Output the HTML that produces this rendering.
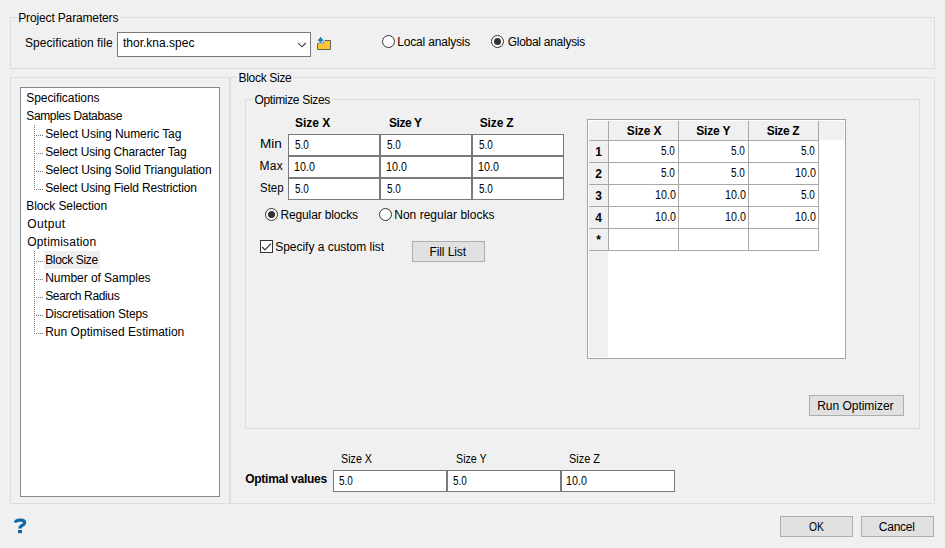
<!DOCTYPE html>
<html><head><meta charset="utf-8"><style>
html,body{margin:0;padding:0;}
body{width:945px;height:548px;background:#f0f0f0;position:relative;overflow:hidden;font-family:"Liberation Sans",sans-serif;font-size:12px;color:#000;}
.a{position:absolute;box-sizing:border-box;}
.t{line-height:14px;white-space:nowrap;}
</style></head><body>
<div class="a" style="left:10px;top:17px;width:7px;height:1px;background:#dcdcdc"></div>
<div class="a" style="left:120px;top:17px;width:815px;height:1px;background:#dcdcdc"></div>
<div class="a" style="left:10px;top:17px;width:1px;height:52px;background:#dcdcdc"></div>
<div class="a" style="left:934px;top:17px;width:1px;height:52px;background:#dcdcdc"></div>
<div class="a" style="left:10px;top:68px;width:925px;height:1px;background:#dcdcdc"></div>
<div class="a t" style="left:18.27px;top:11px;letter-spacing:-0.149px;">Project Parameters</div>
<div class="a t" style="left:25.02px;top:36px;letter-spacing:0.051px;">Specification file</div>
<div class="a" style="left:117px;top:32px;width:194px;height:25px;border:1px solid #7a7a7a;background:#fff;box-sizing:border-box;"></div>
<div class="a t" style="left:123px;top:36px;">thor.kna.spec</div>
<svg class="a" style="left:297px;top:41px" width="11" height="7"><path d="M1.2 2.2 L5 5.8 L8.8 2.0" stroke="#3a3a3a" stroke-width="1.15" fill="none"/></svg>
<svg class="a" style="left:314px;top:34px" width="20" height="18">
<path d="M3.5 9.5 H9 L10.5 6.5 H16.5 V15.5 H3.5 Z" fill="#fdc52f" stroke="#606060" stroke-width="1"/>
<path d="M6.6 2.2 L10.6 7.2 H8.3 V9.2 H4.9 V7.2 H2.6 Z" fill="#1a80b8" stroke="#fff" stroke-width="0.8" stroke-linejoin="round"/>
</svg>
<div class="a" style="left:382px;top:35px;width:13px;height:13px;border:1px solid #333;border-radius:50%;background:#fff"></div>
<div class="a t" style="left:397.23px;top:35px;letter-spacing:-0.175px;">Local analysis</div>
<div class="a" style="left:491px;top:35px;width:13px;height:13px;border:1px solid #333;border-radius:50%;background:#fff"></div>
<div class="a" style="left:494px;top:38px;width:7px;height:7px;border-radius:50%;background:#333"></div>
<div class="a t" style="left:507.73px;top:35px;letter-spacing:-0.275px;">Global analysis</div>
<div class="a" style="left:10px;top:77px;width:227px;height:1px;background:#dcdcdc"></div>
<div class="a" style="left:10px;top:77px;width:1px;height:427px;background:#dcdcdc"></div>
<div class="a" style="left:10px;top:503px;width:925px;height:1px;background:#dcdcdc"></div>
<div class="a" style="left:229px;top:77px;width:1px;height:427px;background:#dcdcdc"></div>
<div class="a" style="left:230px;top:77px;width:1px;height:427px;background:#dcdcdc"></div>
<div class="a" style="left:293px;top:77px;width:642px;height:1px;background:#dcdcdc"></div>
<div class="a" style="left:934px;top:77px;width:1px;height:427px;background:#dcdcdc"></div>
<div class="a t" style="left:238.52px;top:71px;letter-spacing:-0.306px;">Block Size</div>
<div class="a" style="left:20px;top:87px;width:200px;height:410px;border:1px solid #828790;background:#fff;box-sizing:border-box;"></div>
<div class="a" style="left:44px;top:251px;width:56px;height:18px;background:#eeeeee;box-sizing:border-box;"></div>
<div class="a t" style="left:26.23px;top:91px;letter-spacing:-0.056px;">Specifications</div>
<div class="a t" style="left:26.23px;top:109px;letter-spacing:-0.345px;">Samples Database</div>
<div class="a t" style="left:45.19px;top:127px;letter-spacing:-0.073px;">Select Using Numeric Tag</div>
<div class="a t" style="left:45.19px;top:145px;letter-spacing:-0.176px;">Select Using Character Tag</div>
<div class="a t" style="left:45.19px;top:163px;letter-spacing:-0.098px;">Select Using Solid Triangulation</div>
<div class="a t" style="left:45.19px;top:181px;letter-spacing:-0.172px;">Select Using Field Restriction</div>
<div class="a t" style="left:26.23px;top:199px;letter-spacing:-0.084px;">Block Selection</div>
<div class="a t" style="left:27.23px;top:217px;letter-spacing:0.38px;">Output</div>
<div class="a t" style="left:27.23px;top:235px;letter-spacing:0.196px;">Optimisation</div>
<div class="a t" style="left:45.19px;top:253px;letter-spacing:-0.333px;">Block Size</div>
<div class="a t" style="left:45.19px;top:271px;letter-spacing:-0.042px;">Number of Samples</div>
<div class="a t" style="left:45.19px;top:289px;letter-spacing:-0.352px;">Search Radius</div>
<div class="a t" style="left:45.19px;top:307px;letter-spacing:-0.174px;">Discretisation Steps</div>
<div class="a t" style="left:45.19px;top:325px;letter-spacing:0.015px;">Run Optimised Estimation</div>
<div class="a" style="left:34px;top:125px;width:1px;height:65px;background:repeating-linear-gradient(to bottom,#777 0 1px,transparent 1px 2px)"></div>
<div class="a" style="left:36px;top:135px;width:7px;height:1px;background:repeating-linear-gradient(to right,#777 0 1px,transparent 1px 2px)"></div>
<div class="a" style="left:36px;top:153px;width:7px;height:1px;background:repeating-linear-gradient(to right,#777 0 1px,transparent 1px 2px)"></div>
<div class="a" style="left:36px;top:171px;width:7px;height:1px;background:repeating-linear-gradient(to right,#777 0 1px,transparent 1px 2px)"></div>
<div class="a" style="left:36px;top:189px;width:7px;height:1px;background:repeating-linear-gradient(to right,#777 0 1px,transparent 1px 2px)"></div>
<div class="a" style="left:34px;top:251px;width:1px;height:83px;background:repeating-linear-gradient(to bottom,#777 0 1px,transparent 1px 2px)"></div>
<div class="a" style="left:36px;top:261px;width:7px;height:1px;background:repeating-linear-gradient(to right,#777 0 1px,transparent 1px 2px)"></div>
<div class="a" style="left:36px;top:279px;width:7px;height:1px;background:repeating-linear-gradient(to right,#777 0 1px,transparent 1px 2px)"></div>
<div class="a" style="left:36px;top:297px;width:7px;height:1px;background:repeating-linear-gradient(to right,#777 0 1px,transparent 1px 2px)"></div>
<div class="a" style="left:36px;top:315px;width:7px;height:1px;background:repeating-linear-gradient(to right,#777 0 1px,transparent 1px 2px)"></div>
<div class="a" style="left:36px;top:333px;width:7px;height:1px;background:repeating-linear-gradient(to right,#777 0 1px,transparent 1px 2px)"></div>
<div class="a" style="left:245px;top:99px;width:8px;height:1px;background:#dcdcdc"></div>
<div class="a" style="left:332px;top:99px;width:588px;height:1px;background:#dcdcdc"></div>
<div class="a" style="left:245px;top:99px;width:1px;height:330px;background:#dcdcdc"></div>
<div class="a" style="left:919px;top:99px;width:1px;height:330px;background:#dcdcdc"></div>
<div class="a" style="left:245px;top:428px;width:675px;height:1px;background:#dcdcdc"></div>
<div class="a t" style="left:254.5px;top:93px;letter-spacing:-0.329px;">Optimize Sizes</div>
<div class="a t" style="left:295.0px;top:116px;font-weight:bold;letter-spacing:0.0px;">Size X</div>
<div class="a t" style="left:389.02px;top:116px;font-weight:bold;letter-spacing:-0.44px;">Size Y</div>
<div class="a t" style="left:479.73px;top:116px;font-weight:bold;letter-spacing:-0.14px;">Size Z</div>
<div class="a t" style="left:259.8px;top:137px;transform:scaleX(1.1279);transform-origin:0 0;">Min</div>
<div class="a t" style="left:259.51px;top:159px;letter-spacing:0.35px;">Max</div>
<div class="a t" style="left:259.6px;top:181px;transform:scaleX(0.9529);transform-origin:0 0;">Step</div>
<div class="a" style="left:288px;top:134px;width:92px;height:22px;border:1px solid #7a7a7a;background:#fff;box-sizing:border-box;"></div>
<div class="a t" style="left:294.6px;top:138px;transform:scaleX(0.8299);transform-origin:0 0;">5.0</div>
<div class="a" style="left:380px;top:134px;width:92px;height:22px;border:1px solid #7a7a7a;background:#fff;box-sizing:border-box;"></div>
<div class="a t" style="left:386.6px;top:138px;transform:scaleX(0.8299);transform-origin:0 0;">5.0</div>
<div class="a" style="left:472px;top:134px;width:92px;height:22px;border:1px solid #7a7a7a;background:#fff;box-sizing:border-box;"></div>
<div class="a t" style="left:478.6px;top:138px;transform:scaleX(0.8299);transform-origin:0 0;">5.0</div>
<div class="a" style="left:288px;top:156px;width:92px;height:22px;border:1px solid #7a7a7a;background:#fff;box-sizing:border-box;"></div>
<div class="a t" style="left:293.6px;top:160px;transform:scaleX(0.8921);transform-origin:0 0;">10.0</div>
<div class="a" style="left:380px;top:156px;width:92px;height:22px;border:1px solid #7a7a7a;background:#fff;box-sizing:border-box;"></div>
<div class="a t" style="left:385.6px;top:160px;transform:scaleX(0.8921);transform-origin:0 0;">10.0</div>
<div class="a" style="left:472px;top:156px;width:92px;height:22px;border:1px solid #7a7a7a;background:#fff;box-sizing:border-box;"></div>
<div class="a t" style="left:477.6px;top:160px;transform:scaleX(0.8921);transform-origin:0 0;">10.0</div>
<div class="a" style="left:288px;top:178px;width:92px;height:22px;border:1px solid #7a7a7a;background:#fff;box-sizing:border-box;"></div>
<div class="a t" style="left:294.6px;top:182px;transform:scaleX(0.8299);transform-origin:0 0;">5.0</div>
<div class="a" style="left:380px;top:178px;width:92px;height:22px;border:1px solid #7a7a7a;background:#fff;box-sizing:border-box;"></div>
<div class="a t" style="left:386.6px;top:182px;transform:scaleX(0.8299);transform-origin:0 0;">5.0</div>
<div class="a" style="left:472px;top:178px;width:92px;height:22px;border:1px solid #7a7a7a;background:#fff;box-sizing:border-box;"></div>
<div class="a t" style="left:478.6px;top:182px;transform:scaleX(0.8299);transform-origin:0 0;">5.0</div>
<div class="a" style="left:265px;top:208px;width:13px;height:13px;border:1px solid #333;border-radius:50%;background:#fff"></div>
<div class="a" style="left:268px;top:211px;width:7px;height:7px;border-radius:50%;background:#333"></div>
<div class="a t" style="left:280.52px;top:208px;letter-spacing:-0.146px;">Regular blocks</div>
<div class="a" style="left:379px;top:208px;width:13px;height:13px;border:1px solid #333;border-radius:50%;background:#fff"></div>
<div class="a t" style="left:394.27px;top:208px;letter-spacing:0.008px;">Non regular blocks</div>
<div class="a" style="left:260px;top:240px;width:13px;height:13px;border:1px solid #333;background:#fff"></div>
<svg class="a" style="left:260px;top:240px" width="13" height="13"><path d="M2.2 7 L5 9.8 L11 3.6" stroke="#333" stroke-width="1.2" fill="none"/></svg>
<div class="a t" style="left:275.23px;top:240px;letter-spacing:-0.025px;">Specify a custom list</div>
<div class="a" style="left:412px;top:241px;width:73px;height:21px;border:1px solid #adadad;background:#e1e1e1;box-sizing:border-box;"></div>
<div class="a t" style="left:429.5px;top:245px;letter-spacing:-0.102px;">Fill List</div>
<div class="a" style="left:587px;top:119px;width:259px;height:240px;border:1px solid #a0a3a9;background:#fff;box-sizing:border-box;"></div>
<div class="a" style="left:589px;top:121px;width:255px;height:19px;background:#f0f0f0;box-sizing:border-box;"></div>
<div class="a" style="left:589px;top:121px;width:19px;height:236px;background:#f0f0f0;box-sizing:border-box;"></div>
<div class="a" style="left:608px;top:121px;width:1px;height:20px;background:#a8a8a8"></div>
<div class="a" style="left:678px;top:121px;width:1px;height:20px;background:#a8a8a8"></div>
<div class="a" style="left:748px;top:121px;width:1px;height:20px;background:#a8a8a8"></div>
<div class="a" style="left:818px;top:121px;width:1px;height:20px;background:#a8a8a8"></div>
<div class="a" style="left:589px;top:140px;width:230px;height:1px;background:#a8a8a8"></div>
<div class="a" style="left:589px;top:162px;width:230px;height:1px;background:#a8a8a8"></div>
<div class="a" style="left:589px;top:184px;width:230px;height:1px;background:#a8a8a8"></div>
<div class="a" style="left:589px;top:206px;width:230px;height:1px;background:#a8a8a8"></div>
<div class="a" style="left:589px;top:228px;width:230px;height:1px;background:#a8a8a8"></div>
<div class="a" style="left:589px;top:250px;width:230px;height:1px;background:#a8a8a8"></div>
<div class="a" style="left:608px;top:140px;width:1px;height:111px;background:#a8a8a8"></div>
<div class="a" style="left:678px;top:140px;width:1px;height:111px;background:#a8a8a8"></div>
<div class="a" style="left:748px;top:140px;width:1px;height:111px;background:#a8a8a8"></div>
<div class="a" style="left:818px;top:140px;width:1px;height:111px;background:#a8a8a8"></div>
<div class="a t" style="left:626.77px;top:124px;font-weight:bold;letter-spacing:-0.14px;">Size X</div>
<div class="a t" style="left:696.25px;top:124px;font-weight:bold;letter-spacing:-0.16px;">Size Y</div>
<div class="a t" style="left:766.77px;top:124px;font-weight:bold;letter-spacing:-0.38px;">Size Z</div>
<div class="a t" style="left:589px;top:145px;font-weight:bold;width:19px;text-align:center;">1</div>
<div class="a t" style="left:661.0px;top:144px;transform:scaleX(0.8299);transform-origin:0 0;">5.0</div>
<div class="a t" style="left:731.0px;top:144px;transform:scaleX(0.8299);transform-origin:0 0;">5.0</div>
<div class="a t" style="left:801.0px;top:144px;transform:scaleX(0.8299);transform-origin:0 0;">5.0</div>
<div class="a t" style="left:589px;top:167px;font-weight:bold;width:19px;text-align:center;">2</div>
<div class="a t" style="left:661.0px;top:166px;transform:scaleX(0.8299);transform-origin:0 0;">5.0</div>
<div class="a t" style="left:731.0px;top:166px;transform:scaleX(0.8299);transform-origin:0 0;">5.0</div>
<div class="a t" style="left:794.6px;top:166px;transform:scaleX(0.8921);transform-origin:0 0;">10.0</div>
<div class="a t" style="left:589px;top:189px;font-weight:bold;width:19px;text-align:center;">3</div>
<div class="a t" style="left:654.6px;top:188px;transform:scaleX(0.8921);transform-origin:0 0;">10.0</div>
<div class="a t" style="left:724.6px;top:188px;transform:scaleX(0.8921);transform-origin:0 0;">10.0</div>
<div class="a t" style="left:801.0px;top:188px;transform:scaleX(0.8299);transform-origin:0 0;">5.0</div>
<div class="a t" style="left:589px;top:211px;font-weight:bold;width:19px;text-align:center;">4</div>
<div class="a t" style="left:654.6px;top:210px;transform:scaleX(0.8921);transform-origin:0 0;">10.0</div>
<div class="a t" style="left:724.6px;top:210px;transform:scaleX(0.8921);transform-origin:0 0;">10.0</div>
<div class="a t" style="left:794.6px;top:210px;transform:scaleX(0.8921);transform-origin:0 0;">10.0</div>
<div class="a t" style="left:589px;top:233px;font-weight:bold;width:19px;text-align:center;">*</div>
<div class="a" style="left:809px;top:395px;width:95px;height:21px;border:1px solid #adadad;background:#e1e1e1;box-sizing:border-box;"></div>
<div class="a t" style="left:817.19px;top:399px;letter-spacing:-0.027px;">Run Optimizer</div>
<div class="a t" style="left:245.23px;top:472px;font-weight:bold;letter-spacing:-0.267px;">Optimal values</div>
<div class="a t" style="left:341.2px;top:452px;transform:scaleX(0.8947);transform-origin:0 0;">Size X</div>
<div class="a" style="left:333px;top:470px;width:114px;height:22px;border:1px solid #7a7a7a;background:#fff;box-sizing:border-box;"></div>
<div class="a t" style="left:339.2px;top:474px;transform:scaleX(0.8299);transform-origin:0 0;">5.0</div>
<div class="a t" style="left:455.6px;top:452px;transform:scaleX(0.891);transform-origin:0 0;">Size Y</div>
<div class="a" style="left:447px;top:470px;width:114px;height:22px;border:1px solid #7a7a7a;background:#fff;box-sizing:border-box;"></div>
<div class="a t" style="left:453.2px;top:474px;transform:scaleX(0.8299);transform-origin:0 0;">5.0</div>
<div class="a t" style="left:568.9px;top:452px;transform:scaleX(0.9125);transform-origin:0 0;">Size Z</div>
<div class="a" style="left:561px;top:470px;width:114px;height:22px;border:1px solid #7a7a7a;background:#fff;box-sizing:border-box;"></div>
<div class="a t" style="left:566.2px;top:474px;transform:scaleX(0.8921);transform-origin:0 0;">10.0</div>
<svg class="a" style="left:5px;top:510px" width="30" height="30">
<path d="M10.4 12.6 Q10.6 10.2 15.6 10.2 Q19.6 10.2 19.6 12.4 Q19.6 14.2 17.2 15.4 Q15 16.5 15 18.4" stroke="#0d6aa6" stroke-width="3.2" fill="none"/>
<rect x="13" y="20" width="4" height="3.2" fill="#0d6aa6"/>
</svg>
<div class="a" style="left:780px;top:516px;width:73px;height:21px;border:1px solid #adadad;background:#e1e1e1;box-sizing:border-box;"></div>
<div class="a t" style="left:808.5px;top:520px;transform:scaleX(0.8607);transform-origin:0 0;">OK</div>
<div class="a" style="left:861px;top:516px;width:73px;height:21px;border:1px solid #adadad;background:#e1e1e1;box-sizing:border-box;"></div>
<div class="a t" style="left:878.8px;top:520px;letter-spacing:-0.24px;">Cancel</div>
</body></html>
